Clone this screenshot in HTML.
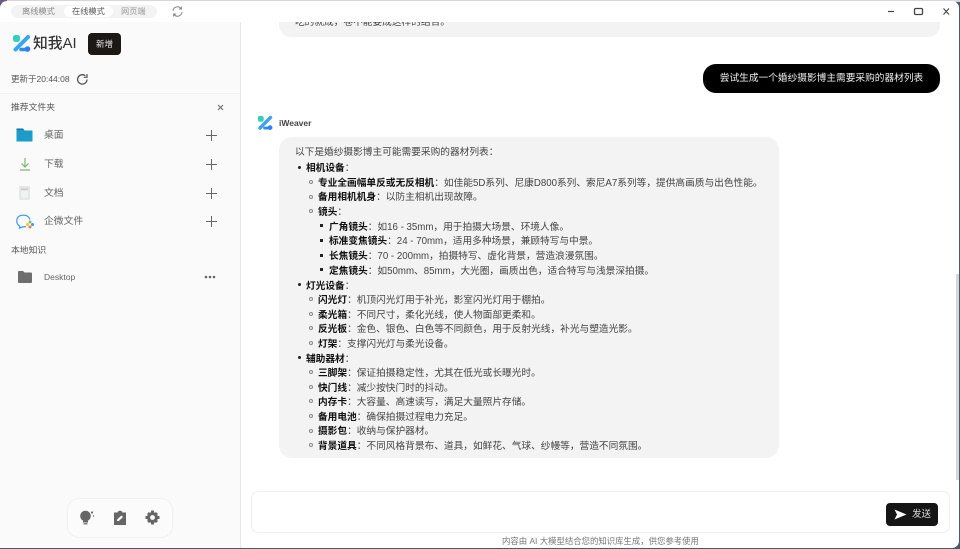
<!DOCTYPE html>
<html lang="zh"><head><meta charset="utf-8"><title>知我AI</title>
<style>
html,body{margin:0;padding:0;width:960px;height:549px;overflow:hidden;background:#4b5a66}
*{box-sizing:border-box}
body{font-family:"Liberation Sans","Noto Sans CJK SC",sans-serif;position:relative}
#all{position:absolute;left:0;top:0;width:960px;height:549px;filter:blur(.35px)}
#win{position:absolute;left:0;top:1px;width:959px;height:547px;background:#fff;border-radius:7px 7px 7px 0;overflow:hidden}
.a{position:absolute;white-space:nowrap}
#side{position:absolute;left:0;top:22px;width:241px;height:526px;background:#fafafa;border-right:1px solid #e8e8e8}
.l{position:absolute;white-space:nowrap;font-size:9.7px;line-height:14px;color:#444;height:14px;margin-top:2px}
.l b{color:#111;font-weight:700}
.d{position:absolute;width:3px;height:3px;border-radius:50%;background:#222}
.c{position:absolute;width:4px;height:4px;border-radius:50%;border:1px solid #888}
.s{position:absolute;width:3px;height:3px;background:#222}
.plus{position:absolute;left:206px;width:11px;height:11px;background:linear-gradient(#666,#666) center/11px 1.2px no-repeat,linear-gradient(#666,#666) center/1.2px 11px no-repeat}
.nm{position:absolute;left:44px;font-size:9.8px;color:#666;line-height:14px;white-space:nowrap;margin-top:1px}
</style></head><body><div id="all">
<div style="position:absolute;left:0;top:0;width:960px;height:2px;background:#d9d3dc"></div>
<div style="position:absolute;left:0;top:0;width:7px;height:3px;background:#6d5a80"></div>
<div id="win"></div>

<!-- title bar -->
<div class="a" style="left:11px;top:5px;width:146px;height:13px;border-radius:7px;background:#f3f3f3"></div>
<div class="a" style="left:64px;top:6px;width:49px;height:11px;border-radius:6px;background:#fff"></div>
<div class="a" style="left:22px;top:5px;font-size:8.2px;line-height:13px;color:#888">离线模式</div>
<div class="a" style="left:72px;top:5px;font-size:8.2px;line-height:13px;color:#555">在线模式</div>
<div class="a" style="left:121px;top:5px;font-size:8.2px;line-height:13px;color:#999">网页端</div>
<svg class="a" style="left:171px;top:5px" width="13" height="13" viewBox="0 0 13 13" fill="none" stroke="#888" stroke-width="1"><path d="M2 6A4.5 4.5 0 0 1 10 3.5"/><path d="M10.4 1.5V4H8"/><path d="M11 7A4.5 4.5 0 0 1 3 9.5"/><path d="M2.6 11.5V9H5"/></svg>

<svg class="a" style="left:888px;top:6px" width="65" height="12" viewBox="0 0 65 12" fill="none" stroke="#444"><path d="M0 5.5H6" stroke-width="1.2"/><rect x="26.5" y="2.5" width="8" height="6" rx="1.2" stroke-width="1.3"/><path d="M55.5 2.5L61 8.5M61 2.5L55.5 8.5" stroke-width="1.1"/></svg>

<!-- sidebar -->
<div id="side"></div>
<svg class="a" style="left:12px;top:34px" width="19" height="19" viewBox="0 0 19 19" fill="none"><rect x="1" y="1" width="7" height="7" rx="2.5" fill="#35cfc0"/><path d="M16 3L3.5 15.5" stroke="#3ba4f0" stroke-width="4" stroke-linecap="round"/><path d="M9 15.5H15" stroke="#2d8ef0" stroke-width="3.5" stroke-linecap="round"/><circle cx="15.5" cy="15" r="2.8" fill="#2f7ff0"/></svg>
<div class="a" style="left:33px;top:34px;font-size:14.8px;line-height:20px;color:#333;font-weight:500">知我AI</div>
<div class="a" style="left:88px;top:33px;width:33px;height:22px;border-radius:4px;background:#1c1815;color:#e8e8e8;font-size:8.5px;line-height:22px;text-align:center">新增</div>
<div class="a" style="left:11px;top:73px;font-size:8.5px;line-height:13px;color:#555">更新于20:44:08</div>
<svg class="a" style="left:76px;top:73px" width="13" height="13" viewBox="0 0 13 13" fill="none" stroke="#555" stroke-width="1.3"><path d="M11 6.5A4.7 4.7 0 1 1 9.3 2.8"/><path d="M11 1V4.3H7.8" stroke-width="1.2"/></svg>
<div class="a" style="left:0;top:93px;width:240px;height:1px;background:#f0f0f0"></div>
<div class="a" style="left:11px;top:101px;font-size:8.8px;line-height:13px;color:#555">推荐文件夹</div>
<svg class="a" style="left:217px;top:104px" width="7" height="7" viewBox="0 0 7 7" stroke="#666" stroke-width="1"><path d="M1 1L6 6M6 1L1 6"/></svg>

<svg class="a" style="left:16px;top:128px" width="17" height="14" viewBox="0 0 17 14"><path d="M0.5 1.5Q0.5 0.5 1.5 0.5H7L8.5 2.5H16.5V13.5H0.5Z" fill="#1d9bc9"/><path d="M0.5 0.5H7L8 2H0.5Z" fill="#1472ad"/></svg>
<div class="nm" style="top:128px">桌面</div><div class="plus" style="top:130px"></div>
<svg class="a" style="left:18px;top:157px" width="14" height="15" viewBox="0 0 14 15" fill="none" stroke="#7fb477" stroke-width="1.2"><path d="M7 1V10M3.5 6.5L7 10L10.5 6.5M2 13H12"/></svg>
<div class="nm" style="top:157px">下载</div><div class="plus" style="top:159px"></div>
<svg class="a" style="left:19px;top:186px" width="11" height="14" viewBox="0 0 11 14"><rect width="11" height="14" rx="1" fill="#e6e8e8"/><rect x="2" y="2.5" width="7" height="1.5" fill="#c9cdcd"/><rect x="2" y="5" width="7" height="6.5" fill="#f1f2f2"/></svg>
<div class="nm" style="top:186px">文档</div><div class="plus" style="top:188px"></div>
<svg class="a" style="left:16px;top:214px" width="18" height="15" viewBox="0 0 18 15" fill="none"><path d="M4 12.5Q0.8 10.5 0.8 7Q0.8 1.2 7.5 1.2Q12.8 1.2 13.8 5.5" stroke="#3d95f5" stroke-width="1.2"/><path d="M4 12.5L3.5 14L7 12.8Q8.5 13 10 12.5" stroke="#3d95f5" stroke-width="1.2"/><circle cx="14" cy="8" r="1.5" fill="#7cc45a"/><circle cx="16.5" cy="10.5" r="1.5" fill="#3d95f5"/><circle cx="14" cy="13" r="1.5" fill="#ef7b3e"/><circle cx="11.5" cy="10.5" r="1.5" fill="#f5c23c"/></svg>
<div class="nm" style="top:214px">企微文件</div><div class="plus" style="top:216px"></div>
<div class="a" style="left:11px;top:244px;font-size:8.8px;line-height:13px;color:#555">本地知识</div>
<svg class="a" style="left:18px;top:271px" width="14" height="12" viewBox="0 0 14 12"><path d="M0 1Q0 0 1 0H5L6.5 1.5H13Q14 1.5 14 2.5V11Q14 12 13 12H1Q0 12 0 11Z" fill="#6e6e6e"/></svg>
<div class="nm" style="top:269px;font-size:8.5px">Desktop</div>
<svg class="a" style="left:204px;top:275px" width="12" height="4" viewBox="0 0 12 4" fill="#666"><circle cx="2" cy="2" r="1.3"/><circle cx="6" cy="2" r="1.3"/><circle cx="10" cy="2" r="1.3"/></svg>

<div class="a" style="left:67px;top:498px;width:106px;height:40px;border-radius:12px;background:#fbfbfb;border:1px solid #f0f0f0"></div>
<svg class="a" style="left:78px;top:509px" width="18" height="18" viewBox="0 0 18 18" fill="#666"><circle cx="7.5" cy="7" r="5.3"/><rect x="5" y="12" width="5" height="1.5"/><rect x="5.500" y="14.2" width="4" height="1.2"/><circle cx="14" cy="3.5" r="1.1"/><circle cx="15.5" cy="7" r=".7"/></svg>
<svg class="a" style="left:113px;top:510px" width="14" height="15" viewBox="0 0 14 15"><path d="M1 2.5H4.5Q5 .7 7 .7T9.5 2.5H13V15H1Z" fill="#666"/><path d="M4 11L4.3 9.3L8.5 5.5L10 7L5.800 11Z" fill="#fff"/></svg>
<svg class="a" style="left:145px;top:510px" width="15" height="15" viewBox="0 0 15 15"><circle cx="7.5" cy="7.5" r="3.9" fill="none" stroke="#666" stroke-width="3"/><path d="M6 0.5H9V3H6ZM6 12H9V14.5H6ZM0.5 6V9H3V6ZM12 6V9H14.5V6Z" fill="#666"/><path d="M2 4L4 2L5.5 3.5L3.5 5.5ZM13 4L11 2L9.5 3.5L11.5 5.5ZM2 11L4 13L5.5 11.5L3.5 9.5ZM13 11L11 13L9.5 11.5L11.5 9.5Z" fill="#666"/></svg>

<!-- top cut-off bubble -->
<div style="position:absolute;left:279px;top:22px;width:661px;height:15px;background:#f3f3f3;border-radius:0 0 12px 12px;overflow:hidden">
<div class="l" style="left:16px;top:-8px">吃的就成，卷不能要成这样的结合。</div></div>

<!-- user bubble -->
<div class="a" style="left:703px;top:64px;width:237px;height:29px;border-radius:13px;background:#000;color:#eee;font-size:9.7px;line-height:29px;text-align:center">尝试生成一个婚纱摄影博主需要采购的器材列表</div>

<!-- bot -->
<svg class="a" style="left:257px;top:115px" width="16" height="16" viewBox="0 0 19 19" fill="none"><rect x="1" y="1" width="7" height="7" rx="2.5" fill="#35cfc0"/><path d="M16 3L3.5 15.5" stroke="#3ba4f0" stroke-width="4" stroke-linecap="round"/><path d="M9 15.5H15" stroke="#2d8ef0" stroke-width="3.5" stroke-linecap="round"/><circle cx="15.5" cy="15" r="2.8" fill="#2f7ff0"/></svg>
<div class="a" style="left:279px;top:117px;font-size:8.5px;line-height:13px;font-weight:700;color:#444">iWeaver</div>
<div class="a" style="left:279px;top:137px;width:500px;height:321px;background:#f3f3f3;border-radius:13px"></div>

<div class="l" style="left:295px;top:144px">以下是婚纱摄影博主可能需要采购的器材列表：</div>

<i class="d" style="left:298px;top:166px"></i><div class="l" style="left:306px;top:160px"><b>相机设备</b>：</div>
<i class="c" style="left:309px;top:180px"></i><div class="l" style="left:318px;top:175px"><b>专业全画幅单反或无反相机</b>：如佳能5D系列、尼康D800系列、索尼A7系列等，提供高画质与出色性能。</div>
<i class="c" style="left:309px;top:195px"></i><div class="l" style="left:318px;top:189px"><b>备用相机机身</b>：以防主相机出现故障。</div>
<i class="c" style="left:309px;top:209px"></i><div class="l" style="left:318px;top:204px"><b>镜头</b>：</div>
<i class="s" style="left:320px;top:224px"></i><div class="l" style="left:329px;top:219px"><b>广角镜头</b>：如16 - 35mm，用于拍摄大场景、环境人像。</div>
<i class="s" style="left:320px;top:239px"></i><div class="l" style="left:329px;top:233px"><b>标准变焦镜头</b>：24 - 70mm，适用多种场景，兼顾特写与中景。</div>
<i class="s" style="left:320px;top:254px"></i><div class="l" style="left:329px;top:248px"><b>长焦镜头</b>：70 - 200mm，拍摄特写、虚化背景，营造浪漫氛围。</div>
<i class="s" style="left:320px;top:268px"></i><div class="l" style="left:329px;top:263px"><b>定焦镜头</b>：如50mm、85mm，大光圈，画质出色，适合特写与浅景深拍摄。</div>

<i class="d" style="left:298px;top:283px"></i><div class="l" style="left:306px;top:278px"><b>灯光设备</b>：</div>
<i class="c" style="left:309px;top:297px"></i><div class="l" style="left:318px;top:292px"><b>闪光灯</b>：机顶闪光灯用于补光，影室闪光灯用于棚拍。</div>
<i class="c" style="left:309px;top:312px"></i><div class="l" style="left:318px;top:307px"><b>柔光箱</b>：不同尺寸，柔化光线，使人物面部更柔和。</div>
<i class="c" style="left:309px;top:326px"></i><div class="l" style="left:318px;top:321px"><b>反光板</b>：金色、银色、白色等不同颜色，用于反射光线，补光与塑造光影。</div>
<i class="c" style="left:309px;top:341px"></i><div class="l" style="left:318px;top:336px"><b>灯架</b>：支撑闪光灯与柔光设备。</div>

<i class="d" style="left:298px;top:356px"></i><div class="l" style="left:306px;top:351px"><b>辅助器材</b>：</div>
<i class="c" style="left:309px;top:370px"></i><div class="l" style="left:318px;top:365px"><b>三脚架</b>：保证拍摄稳定性，尤其在低光或长曝光时。</div>
<i class="c" style="left:309px;top:385px"></i><div class="l" style="left:318px;top:380px"><b>快门线</b>：减少按快门时的抖动。</div>
<i class="c" style="left:309px;top:399px"></i><div class="l" style="left:318px;top:394px"><b>内存卡</b>：大容量、高速读写，满足大量照片存储。</div>
<i class="c" style="left:309px;top:414px"></i><div class="l" style="left:318px;top:409px"><b>备用电池</b>：确保拍摄过程电力充足。</div>
<i class="c" style="left:309px;top:429px"></i><div class="l" style="left:318px;top:423px"><b>摄影包</b>：收纳与保护器材。</div>
<i class="c" style="left:309px;top:443px"></i><div class="l" style="left:318px;top:438px"><b>背景道具</b>：不同风格背景布、道具，如鲜花、气球、纱幔等，营造不同氛围。</div>

<!-- scrollbar -->
<div class="a" style="left:956px;top:274px;width:3px;height:206px;background:#d6d6d6"></div>

<!-- input -->
<div class="a" style="left:251px;top:491px;width:699px;height:42px;border-radius:7px;background:#fff;border:1px solid #f0f0f0"></div>
<div class="a" style="left:886px;top:503px;width:52px;height:23px;border-radius:4px;background:#151515"></div>
<svg class="a" style="left:894px;top:509px" width="13" height="11" viewBox="0 0 13 11"><path d="M0.5 0.5L12.5 5.5L0.5 10.5L3 5.5Z" fill="#fff"/></svg>
<div class="a" style="left:912px;top:508px;font-size:9.5px;line-height:14px;color:#ddd">发送</div>
<div class="a" style="left:502px;top:535px;font-size:8.4px;line-height:13px;color:#777">内容由 AI 大模型结合您的知识库生成，供您参考使用</div>
</div></body></html>
